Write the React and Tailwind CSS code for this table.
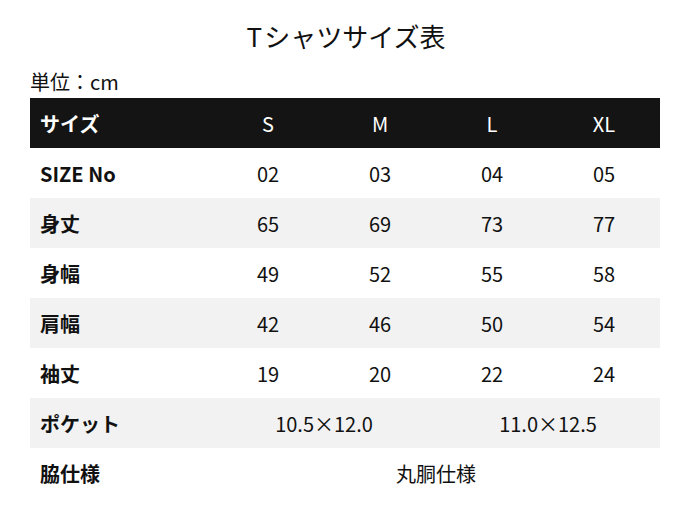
import React from "react";

const rows = [
  { label: "SIZE No", vals: ["02", "03", "04", "05"], gray: false },
  { label: "身丈", vals: ["65", "69", "73", "77"], gray: true },
  { label: "身幅", vals: ["49", "52", "55", "58"], gray: false },
  { label: "肩幅", vals: ["42", "46", "50", "54"], gray: true },
  { label: "袖丈", vals: ["19", "20", "22", "24"], gray: false },
];

export default function App() {
  return (
    <div className="w-[680px] h-[506px] bg-white text-[#111] font-['Noto_Sans_CJK_JP',sans-serif]">
      <div className="pt-[17px] pl-[12px] h-[60px] text-center text-[26px] leading-[38px]">
        T<span className="pl-[2px]">シャツサイズ表</span>
      </div>
      <div className="px-[30px]">
        <div className="h-[38px] pt-[8px] text-[20px] leading-[28px]">単位：cm</div>
        <div className="w-[630px] text-[20px]">
          <div className="grid grid-cols-[182px_112px_112px_112px_112px] h-[50px] pt-[2px] items-center bg-[#141414] text-white">
            <div className="pl-[10px] font-bold">サイズ</div>
            <div className="text-center">S</div>
            <div className="text-center">M</div>
            <div className="text-center">L</div>
            <div className="text-center">XL</div>
          </div>
          {rows.map((r) => (
            <div
              key={r.label}
              className={`grid grid-cols-[182px_112px_112px_112px_112px] h-[50px] pt-[2px] items-center ${r.gray ? "bg-[#f2f2f2]" : "bg-white"}`}
            >
              <div className="pl-[10px] font-bold">{r.label}</div>
              {r.vals.map((v, i) => (
                <div key={i} className="text-center">{v}</div>
              ))}
            </div>
          ))}
          <div className="grid grid-cols-[182px_224px_224px] h-[50px] pt-[2px] items-center bg-[#f2f2f2]">
            <div className="pl-[10px] font-bold">ポケット</div>
            <div className="text-center">10.5×12.0</div>
            <div className="text-center">11.0×12.5</div>
          </div>
          <div className="grid grid-cols-[182px_448px] h-[50px] pt-[2px] items-center bg-white">
            <div className="pl-[10px] font-bold">脇仕様</div>
            <div className="text-center">丸胴仕様</div>
          </div>
        </div>
      </div>
    </div>
  );
}
